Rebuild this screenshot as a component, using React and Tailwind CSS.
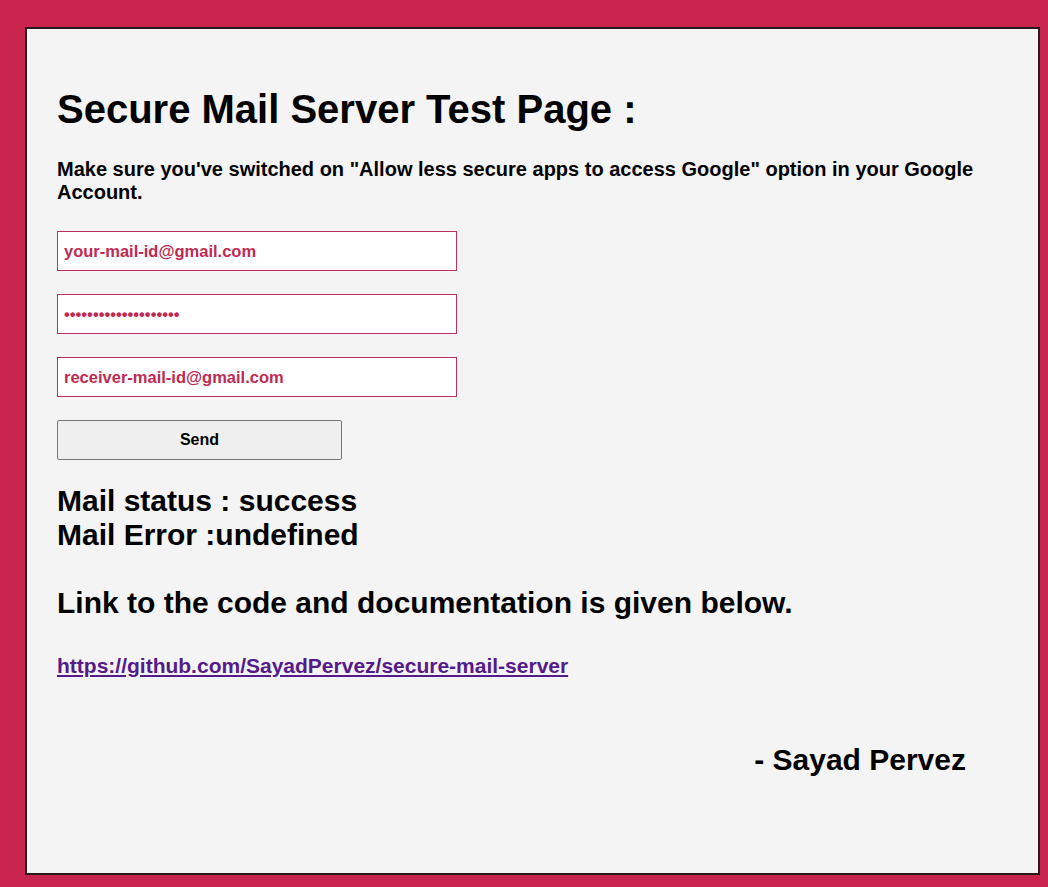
export default function App() {
  return (
    <div className="min-h-[887px] bg-[#c8244e] pl-[25px] pt-[27px] pr-[8px] pb-[12px]" style={{ fontFamily: '"Liberation Sans", Arial, sans-serif' }}>
      <div className="w-[1015px] h-[848px] border-2 border-[#2a1a1e] bg-[#f4f4f4] px-[30px] pt-[57px]">
        <h1 className="text-[40px] font-bold text-black leading-[46px]">Secure Mail Server Test Page :</h1>
        <p className="mt-[26px] text-[20px] font-bold text-black leading-[23px]">
          Make sure you've switched on "Allow less secure apps to access Google" option in your Google Account.
        </p>
        <div className="mt-[27px] flex flex-col gap-[23px] items-start">
          <input
            className="w-[400px] h-[40px] border border-[#b8325a] bg-white px-[6px] text-[16.5px] font-bold text-[#c02a52] outline-none"
            defaultValue="your-mail-id@gmail.com"
          />
          <input
            type="password"
            className="w-[400px] h-[40px] border border-[#b8325a] bg-white px-[6px] text-[16.5px] font-bold text-[#c02a52] outline-none"
            defaultValue="12345678901234567890"
          />
          <input
            className="w-[400px] h-[40px] border border-[#b8325a] bg-white px-[6px] text-[16.5px] font-bold text-[#c02a52] outline-none"
            defaultValue="receiver-mail-id@gmail.com"
          />
          <button className="w-[285px] h-[40px] border border-[#767676] rounded-[2px] bg-[#efefef] text-[16px] font-bold text-black">
            Send
          </button>
        </div>
        <div className="mt-[24px] text-[30px] font-bold text-black leading-[34px]">
          <div>Mail status : success</div>
          <div>Mail Error :undefined</div>
        </div>
        <div className="mt-[34px] text-[30px] font-bold text-black leading-[34px]">
          Link to the code and documentation is given below.
        </div>
        <a href="#" className="mt-[33px] block w-fit text-[21px] font-bold text-[#551a8b] underline leading-[25px]">
          https://github.com/SayadPervez/secure-mail-server
        </a>
        <div className="mt-[65px] pr-[42px] text-right text-[30px] font-bold text-black leading-[34px]">
          - Sayad Pervez
        </div>
      </div>
    </div>
  );
}
